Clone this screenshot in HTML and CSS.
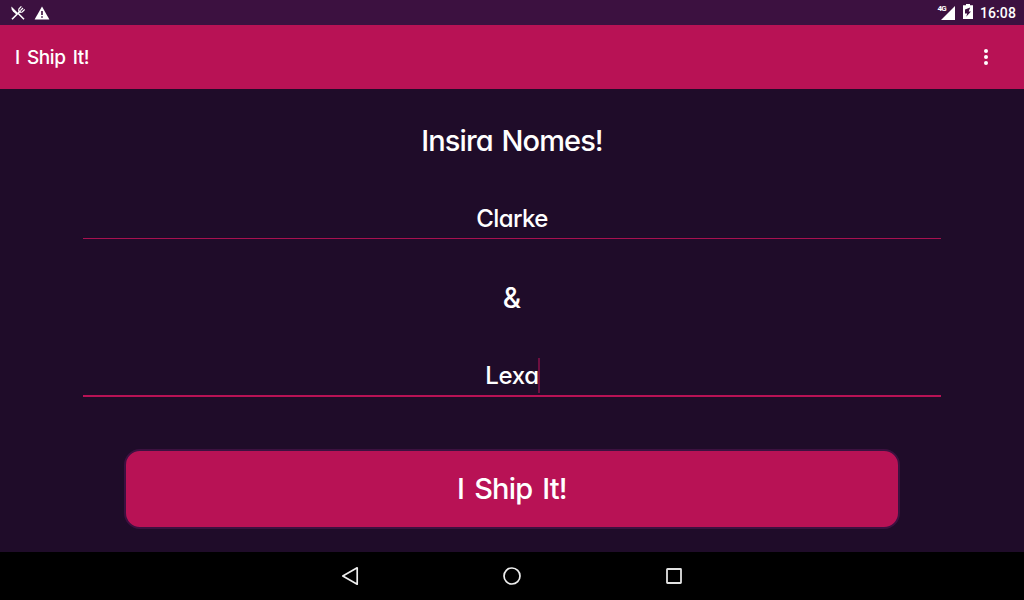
FILE: index.html
```html
<!DOCTYPE html>
<html lang="pt">
<head>
  <meta charset="UTF-8">
  <title>I Ship It!</title>
  <link rel="stylesheet" href="styles.css">
</head>
<body>
  <div class="status-bar">
    <div class="status-icons">
      <svg width="14" height="14" viewBox="0 0 14 14" fill="none" stroke="#fff"><path d="M1 13.2L9.5 4.7M6.8 7L13 13.2" stroke-width="1.6"/><path d="M.4.6l6.8 6.6-1.8 1.4L2 5.4C.8 4.200.2 2.400.4.6z" fill="#fff" stroke="none"/><path d="M10.400.4L8 2.900q-.8 2 .4 2.800 1 1 2.800.3L13.700 3.500M12 2L9.400 4.600" stroke-width="1.200"/></svg>
      <svg width="16" height="14" viewBox="0 0 16 14"><path d="M8 0.5L15.4 13.5H.6z" fill="#fff"/><path d="M7.2 5h1.6v4H7.2zM7.2 10.2h1.6v1.6H7.2z" fill="#3c1140"/></svg>
    </div>
    <div class="status-info">
      <span class="network">4G</span>
      <svg class="signal" width="14" height="14" viewBox="0 0 14 14"><path d="M14 0v14H0z" fill="#fff"/></svg>
      <svg class="battery" width="10" height="15" viewBox="0 0 10 15"><path d="M3 0h4v1.2h3V15H0V1.200h3z" fill="#fff"/><path d="M7.2 3.5L2 5.500v4h2.200l-1 3.300L8 7.400H5.700z" fill="#3c1140"/></svg>
      <span class="clock">16:08</span>
    </div>
  </div>

  <header class="toolbar">
    <span class="toolbar-title">I Ship It!</span>
    <svg width="4" height="16" viewBox="0 0 4 16" fill="#fff"><circle cx="2" cy="2" r="2"/><circle cx="2" cy="8" r="2"/><circle cx="2" cy="14" r="2"/></svg>
  </header>

  <main class="content">
    <h1>Insira Nomes!</h1>
    <div class="field"><span>Clarke</span></div>
    <div class="and">&amp;</div>
    <div class="field focused"><span class="typed">Lexa</span></div>
    <button class="ship-button">I Ship It!</button>
  </main>

  <nav class="nav-bar">
    <svg width="18" height="20" viewBox="0 0 18 20"><path d="M16.2 1.8v16.4L1.8 10z" fill="none" stroke="#eee" stroke-width="1.7" stroke-linejoin="round"/></svg>
    <svg width="18" height="18" viewBox="0 0 18 18"><circle cx="9" cy="9" r="8" fill="none" stroke="#eee" stroke-width="1.7"/></svg>
    <svg width="18" height="18" viewBox="0 0 18 18"><rect x="2" y="2" width="14" height="14" rx=".5" fill="none" stroke="#e2e2e2" stroke-width="1.8"/></svg>
  </nav>
</body>
</html>
```
FILE: styles.css
```css
* {
  box-sizing: border-box;
}

body {
  margin: 0;
  height: 600px;
  display: flex;
  flex-direction: column;
  overflow: hidden;
  background-color: #1f0c29;
  color: #fff;
  font-family: Inter, "Liberation Sans", sans-serif;
  font-feature-settings: "cv11";
  font-weight: 500;
}

.status-bar {
  height: 25px;
  padding: 0 8px 0 11px;
  display: flex;
  justify-content: space-between;
  align-items: center;
  background-color: #3c1140;
}

.status-icons, .status-info {
  display: flex;
  align-items: center;
}

.status-icons {
  gap: 9px;
}

.network {
  align-self: flex-start;
  margin: 4px -5px 0 0;
  font: bold 8px/9px Roboto, sans-serif;
  letter-spacing: -0.8px;
}

.battery {
  margin: 0 7px 2px 8px;
}

.clock {
  font: 500 14px/26px Roboto, sans-serif;
  letter-spacing: 0.1px;
}

.toolbar {
  height: 64px;
  padding: 0 36px 0 15px;
  display: flex;
  justify-content: space-between;
  align-items: center;
  background-color: #b81255;
}

.toolbar-title {
  font-size: 19px;
  letter-spacing: -0.4px;
  word-spacing: 2.5px;
}

.content {
  flex: 1;
  display: flex;
  flex-direction: column;
  align-items: center;
}

h1 {
  margin: 34px 0 0;
  font-size: 29px;
  line-height: 36px;
  font-weight: 500;
  letter-spacing: -0.9px;
  word-spacing: 2px;
}

.field {
  width: 858px;
  height: 38px;
  margin-top: 42px;
  border-bottom: 1px solid #a81150;
  text-align: center;
  font-size: 24px;
  line-height: 36px;
  letter-spacing: -0.6px;
}

.and {
  margin-top: 41px;
  font-size: 28px;
  line-height: 36px;
}

.focused {
  height: 39px;
  border-bottom: 2px solid #b81255;
  letter-spacing: -0.3px;
}

.typed {
  position: relative;
}

/* text cursor */
.typed::after {
  content: "";
  position: absolute;
  right: -1px;
  top: -3px;
  width: 2px;
  height: 35px;
  background-color: #6e0f40;
}

.ship-button {
  width: 776px;
  height: 80px;
  margin-top: 52px;
  padding: 0 0 2px;
  border: 2px solid #3c1140;
  border-radius: 16px;
  background-color: #b81255;
  color: #fff;
  font: inherit;
  font-feature-settings: inherit;
  font-size: 29px;
  letter-spacing: -0.8px;
  word-spacing: 3px;
}

.nav-bar {
  height: 48px;
  display: flex;
  justify-content: center;
  align-items: center;
  gap: 144px;
  background-color: #000;
}
```
